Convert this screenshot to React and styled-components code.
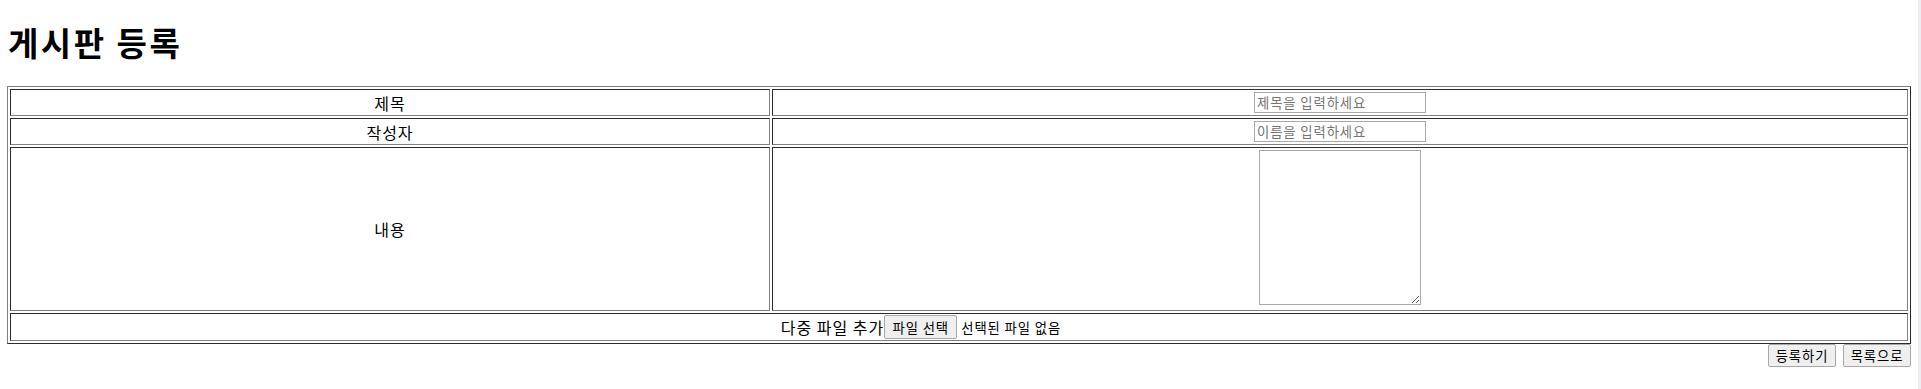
import React from 'react';
import styled, { createGlobalStyle } from 'styled-components';

const GlobalStyle = createGlobalStyle`
  html, body { margin: 0; padding: 0; background: #fff; }
  body {
    font-family: "Noto Sans CJK KR", "Noto Sans", sans-serif;
    color: #000;
  }
`;

const Shell = styled.div`
  display: flex;
  min-height: 100vh;
`;

const Page = styled.main`
  flex: 1;
  min-width: 0;
  padding: 0 7px;
`;

const ScrollEdge = styled.div`
  flex: none;
  width: 3px;
  background: #eeeef2;
`;

const Title = styled.h1`
  margin: 21px 0 22px 1px;
  font-size: 33px;
  line-height: 43px;
  font-weight: 700;
  letter-spacing: 2.5px;
`;

const Board = styled.table`
  width: 100%;
  table-layout: fixed;
  border: 1px outset gray;
  border-spacing: 2px;
`;

const Cell = styled.td`
  box-sizing: border-box;
  border: 1px inset gray;
  padding: 1px;
  width: ${p => p.$w || 'auto'};
`;

const CellBody = styled.div`
  display: flex;
  align-items: ${p => (p.$top ? 'flex-start' : 'center')};
  justify-content: center;
  height: ${p => p.$h}px;
  font-size: 16px;
  line-height: 20px;
  letter-spacing: 1px;
`;

const TextField = styled.input`
  box-sizing: border-box;
  width: 172px;
  height: 21px;
  padding: 1px 2px;
  border: 1px solid #a9a9a9;
  font-family: inherit;
  font-size: 13.33px;
  line-height: 17px;
  letter-spacing: 0.9px;
  outline: none;
  &::placeholder { color: #757575; }
`;

const TextBox = styled.textarea`
  box-sizing: border-box;
  width: 162px;
  height: 155px;
  margin-top: 1px;
  padding: 2px;
  border: 1px solid #a9a9a9;
  font-family: inherit;
  font-size: 13.33px;
  outline: none;
`;

const FilePicker = styled.label`
  display: inline-flex;
  align-items: center;
  gap: 4px;
  width: 253px;
  font-size: 13.33px;
  line-height: 17px;
  letter-spacing: 0.9px;
  cursor: default;
`;

const HiddenFile = styled.input`
  display: none;
`;

const GrayButton = styled.button`
  box-sizing: border-box;
  display: inline-flex;
  align-items: center;
  justify-content: center;
  height: ${p => p.$h || 23}px;
  padding: 0 6px;
  border: 1px solid #a8a8a8;
  border-radius: 2px;
  background: #efefef;
  color: #000;
  font-family: "Noto Sans CJK KR", "Noto Sans", sans-serif;
  font-size: 13.33px;
  line-height: 17px;
  letter-spacing: 0.9px;
  cursor: default;
`;

const FakeFileButton = styled(GrayButton).attrs({ as: 'span' })`
  width: 73px;
`;

const ActionButton = styled(GrayButton)`
  min-width: 68px;
`;

const Actions = styled.div`
  display: flex;
  justify-content: flex-end;
  gap: 7px;
`;

export default function App() {
  return (
    <>
      <GlobalStyle />
      <Shell>
        <Page>
          <Title>게시판 등록</Title>
          <Board>
            <tbody>
              <tr>
                <Cell $w="760px"><CellBody $h={23}>제목</CellBody></Cell>
                <Cell><CellBody $h={23}><TextField placeholder="제목을 입력하세요" /></CellBody></Cell>
              </tr>
              <tr>
                <Cell><CellBody $h={23}>작성자</CellBody></Cell>
                <Cell><CellBody $h={23}><TextField placeholder="이름을 입력하세요" /></CellBody></Cell>
              </tr>
              <tr>
                <Cell><CellBody $h={160}>내용</CellBody></Cell>
                <Cell><CellBody $h={160} $top><TextBox /></CellBody></Cell>
              </tr>
              <tr>
                <Cell colSpan={2}>
                  <CellBody $h={24}>
                    다중 파일 추가
                    <FilePicker>
                      <HiddenFile type="file" multiple />
                      <FakeFileButton $h={24}>파일 선택</FakeFileButton>
                      선택된 파일 없음
                    </FilePicker>
                  </CellBody>
                </Cell>
              </tr>
            </tbody>
          </Board>
          <Actions>
            <ActionButton type="button">등록하기</ActionButton>
            <ActionButton type="button">목록으로</ActionButton>
          </Actions>
        </Page>
        <ScrollEdge />
      </Shell>
    </>
  );
}
